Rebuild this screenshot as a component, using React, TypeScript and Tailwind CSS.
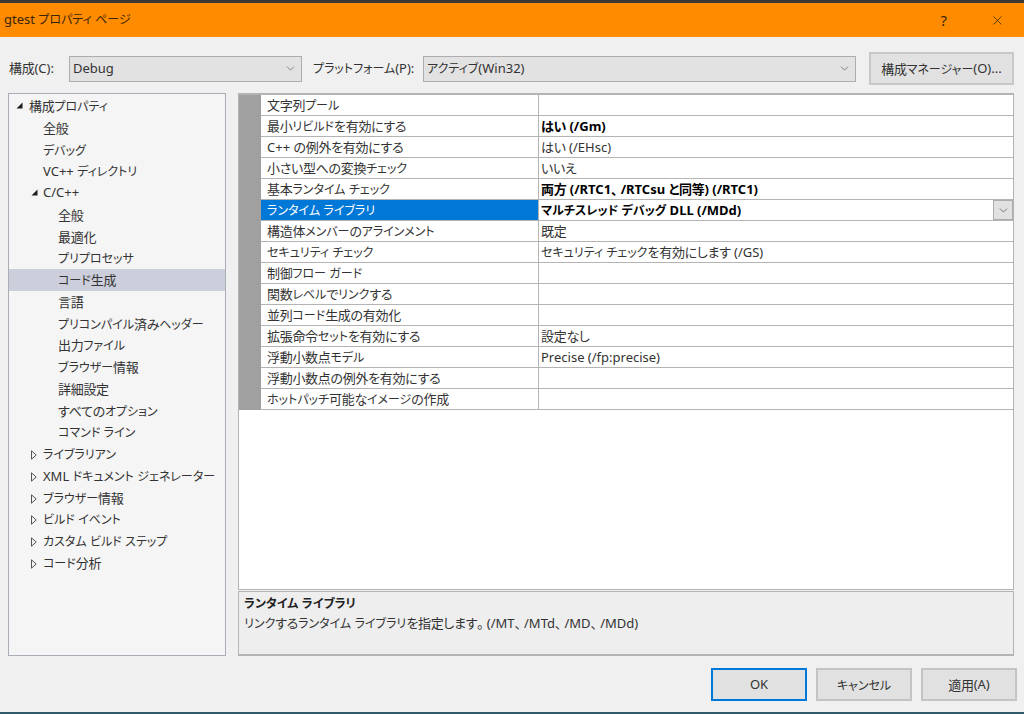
import { ChevronDown, X } from "lucide-react";

const font = { fontFamily: '"Noto Sans", "Noto Sans CJK JP", sans-serif' };
const cjk = { fontFamily: '"Noto Sans CJK JP", sans-serif' };

// Meiryo UI look: katakana run small and narrow, kanji stay full size
function Txt({ children }: { children: string }) {
  const parts = children.split(/([\u30a0-\u30ff]+|[\u3001\u3002]|[\u3040-\u309f\u4e00-\u9fff]+)/).filter(Boolean);
  return (
    <>
      {parts.map((part, i) => {
        if (/[\u30a0-\u30ff]/.test(part)) {
          return (
            <span key={i} style={cjk} className="text-[12px] [font-feature-settings:'palt']">
              {part}
            </span>
          );
        }
        if (/[\u3001\u3002]/.test(part)) {
          return (
            <span key={i} style={cjk} className="pr-[3px] text-[13px] [font-feature-settings:'palt']">
              {part}
            </span>
          );
        }
        if (/[\u3040-\u309f\u4e00-\u9fff]/.test(part)) {
          return (
            <span key={i} style={cjk} className="text-[13px] tracking-[-0.3px] [font-feature-settings:'palt']">
              {part}
            </span>
          );
        }
        return <span key={i}>{part}</span>;
      })}
    </>
  );
}

type TreeItem = { label: string; level: number; arrow?: "open" | "closed"; selected?: boolean };

const treeItems: TreeItem[] = [
  { label: "構成プロパティ", level: 0, arrow: "open" },
  { label: "全般", level: 1 },
  { label: "デバッグ", level: 1 },
  { label: "VC++ ディレクトリ", level: 1 },
  { label: "C/C++", level: 1, arrow: "open" },
  { label: "全般", level: 2 },
  { label: "最適化", level: 2 },
  { label: "プリプロセッサ", level: 2 },
  { label: "コード生成", level: 2, selected: true },
  { label: "言語", level: 2 },
  { label: "プリコンパイル済みヘッダー", level: 2 },
  { label: "出力ファイル", level: 2 },
  { label: "ブラウザー情報", level: 2 },
  { label: "詳細設定", level: 2 },
  { label: "すべてのオプション", level: 2 },
  { label: "コマンド ライン", level: 2 },
  { label: "ライブラリアン", level: 1, arrow: "closed" },
  { label: "XML ドキュメント ジェネレーター", level: 1, arrow: "closed" },
  { label: "ブラウザー情報", level: 1, arrow: "closed" },
  { label: "ビルド イベント", level: 1, arrow: "closed" },
  { label: "カスタム ビルド ステップ", level: 1, arrow: "closed" },
  { label: "コード分析", level: 1, arrow: "closed" },
];

type Row = { name: string; value?: string; bold?: boolean; selected?: boolean };

const rows: Row[] = [
  { name: "文字列プール" },
  { name: "最小リビルドを有効にする", value: "はい (/Gm)", bold: true },
  { name: "C++ の例外を有効にする", value: "はい (/EHsc)" },
  { name: "小さい型への変換チェック", value: "いいえ" },
  { name: "基本ランタイム チェック", value: "両方 (/RTC1、/RTCsu と同等) (/RTC1)", bold: true },
  { name: "ランタイム ライブラリ", value: "マルチスレッド デバッグ DLL (/MDd)", bold: true, selected: true },
  { name: "構造体メンバーのアラインメント", value: "既定" },
  { name: "セキュリティ チェック", value: "セキュリティ チェックを有効にします (/GS)" },
  { name: "制御フロー ガード" },
  { name: "関数レベルでリンクする" },
  { name: "並列コード生成の有効化" },
  { name: "拡張命令セットを有効にする", value: "設定なし" },
  { name: "浮動小数点モデル", value: "Precise (/fp:precise)" },
  { name: "浮動小数点の例外を有効にする" },
  { name: "ホットパッチ可能なイメージの作成" },
];

function Arrow({ kind }: { kind: "open" | "closed" }) {
  if (kind === "open") {
    return (
      <svg width="7" height="7" viewBox="0 0 7 7" className="block">
        <path d="M6.5 0.5V6.5H0.5Z" fill="#1e1e1e" />
      </svg>
    );
  }
  return (
    <svg width="6" height="10" viewBox="0 0 6 10" className="block">
      <path d="M0.5 0.8L5.2 5L0.5 9.2Z" fill="none" stroke="#555" />
    </svg>
  );
}

function TreeRow({ item }: { item: TreeItem }) {
  const indent = item.level === 0 ? "pl-[20px]" : item.level === 1 ? "pl-[34px]" : "pl-[49px]";
  const arrowPos = item.level === 0 ? "left-[7px]" : "left-[22px]";
  return (
    <div className={`relative h-[21.75px] leading-[21.75px] whitespace-nowrap ${indent} ${item.selected ? "bg-[#ccceDB]" : ""}`}>
      {item.arrow && (
        <span className={`absolute top-[7px] ${arrowPos}`}>
          <Arrow kind={item.arrow} />
        </span>
      )}
      <Txt>{item.label}</Txt>
    </div>
  );
}

function GridRow({ row }: { row: Row }) {
  return (
    <div className="flex h-[21px] leading-[20px] whitespace-nowrap">
      <div className="w-[22px] shrink-0 bg-[#a0a0a0]" />
      <div className={`w-[278px] shrink-0 border-b border-r border-[#b4b4b4] pl-[6px] ${row.selected ? "bg-[#0078d7] text-white" : ""}`}>
        <Txt>{row.name}</Txt>
      </div>
      <div className={`relative flex-1 border-b border-[#b4b4b4] pl-[2px] ${row.bold ? "font-bold text-black" : ""}`}>
        {row.value && <Txt>{row.value}</Txt>}
        {row.selected && (
          <span className="absolute right-0 top-0 flex h-[20px] w-[20px] items-center justify-center border border-[#adadad] bg-[#e1e1e1]">
            <ChevronDown size={13} strokeWidth={1.25} color="#444" />
          </span>
        )}
      </div>
    </div>
  );
}

function Select({ value, className }: { value: string; className: string }) {
  return (
    <div className={`flex h-[26px] items-center justify-between border border-[#adadad] bg-[#e2e2e2] pl-[3px] pr-[4px] text-[#333] ${className}`}>
      <span className="whitespace-nowrap">
        <Txt>{value}</Txt>
      </span>
      <ChevronDown size={13} strokeWidth={1.25} color="#555" />
    </div>
  );
}

function Btn({ label, primary, className }: { label: string; primary?: boolean; className: string }) {
  return (
    <div className={`flex h-[33px] items-center justify-center border-2 bg-[#e1e1e1] text-[#333] ${primary ? "border-[#0078d7]" : "border-[#c4c4c4]"} ${className}`}>
      <Txt>{label}</Txt>
    </div>
  );
}

export default function App() {
  return (
    <div style={font} className="flex h-[714px] w-[1024px] flex-col overflow-hidden bg-[#f0f0f0] text-[13px] text-[#333]">
      <div className="h-[3px] shrink-0 bg-[#3c3836]" />

      <div className="flex h-[34px] shrink-0 items-center justify-between bg-[#ff8c00] pl-[4px] pr-[19px] text-[#3a2408]">
        <span>
          <Txt>gtest プロパティ ページ</Txt>
        </span>
        <div className="flex items-center gap-[43px]">
          <span className="text-[15px]">?</span>
          <X size={15} strokeWidth={1.2} color="#3a2408" />
        </div>
      </div>

      <div className="flex h-[56px] shrink-0 items-center pl-[9px] pr-[10px] pt-[7px]">
        <span className="w-[60px] whitespace-nowrap">
          <Txt>構成(C):</Txt>
        </span>
        <Select value="Debug" className="w-[233px]" />
        <span className="ml-[11px] w-[110px] whitespace-nowrap">
          <Txt>プラットフォーム(P):</Txt>
        </span>
        <Select value="アクティブ(Win32)" className="w-[433px]" />
        <div className="ml-[13px] flex h-[33px] w-[145px] items-center justify-center border-2 border-[#c8c8c8] bg-[#e1e1e1]">
          <Txt>構成マネージャー(O)...</Txt>
        </div>
      </div>

      <div className="flex h-[563px] shrink-0 pl-[8px] pr-[10px]">
        <div className="h-full w-[218px] shrink-0 border border-[#a9adb5] bg-[#f5f5f5] pt-[1px]">
          {treeItems.map((item, i) => (
            <TreeRow key={i} item={item} />
          ))}
        </div>

        <div className="ml-[12px] flex flex-1 flex-col">
          <div className="h-[497px] border-x border-b border-t-2 border-[#b4b4b4] bg-white">
            {rows.map((row) => (
              <GridRow key={row.name} row={row} />
            ))}
          </div>
          <div className="mt-[1px] h-[65px] border border-b-2 border-[#b4b4b4] bg-[#eeeeee] pl-[5px] pt-[1px] leading-[20px]">
            <div className="font-bold text-[#222]">
              <Txt>ランタイム ライブラリ</Txt>
            </div>
            <div>
              <Txt>リンクするランタイム ライブラリを指定します。(/MT、/MTd、/MD、/MDd)</Txt>
            </div>
          </div>
        </div>
      </div>

      <div className="flex h-[45px] shrink-0 items-start justify-end pr-[7px] pt-[12px]">
        <Btn label="OK" primary className="w-[96px]" />
        <Btn label="キャンセル" className="ml-[9px] w-[96px]" />
        <Btn label="適用(A)" className="ml-[9px] w-[96px]" />
      </div>

      <div className="mt-auto h-[2px] shrink-0 bg-[#2f5a6a]" />
    </div>
  );
}
